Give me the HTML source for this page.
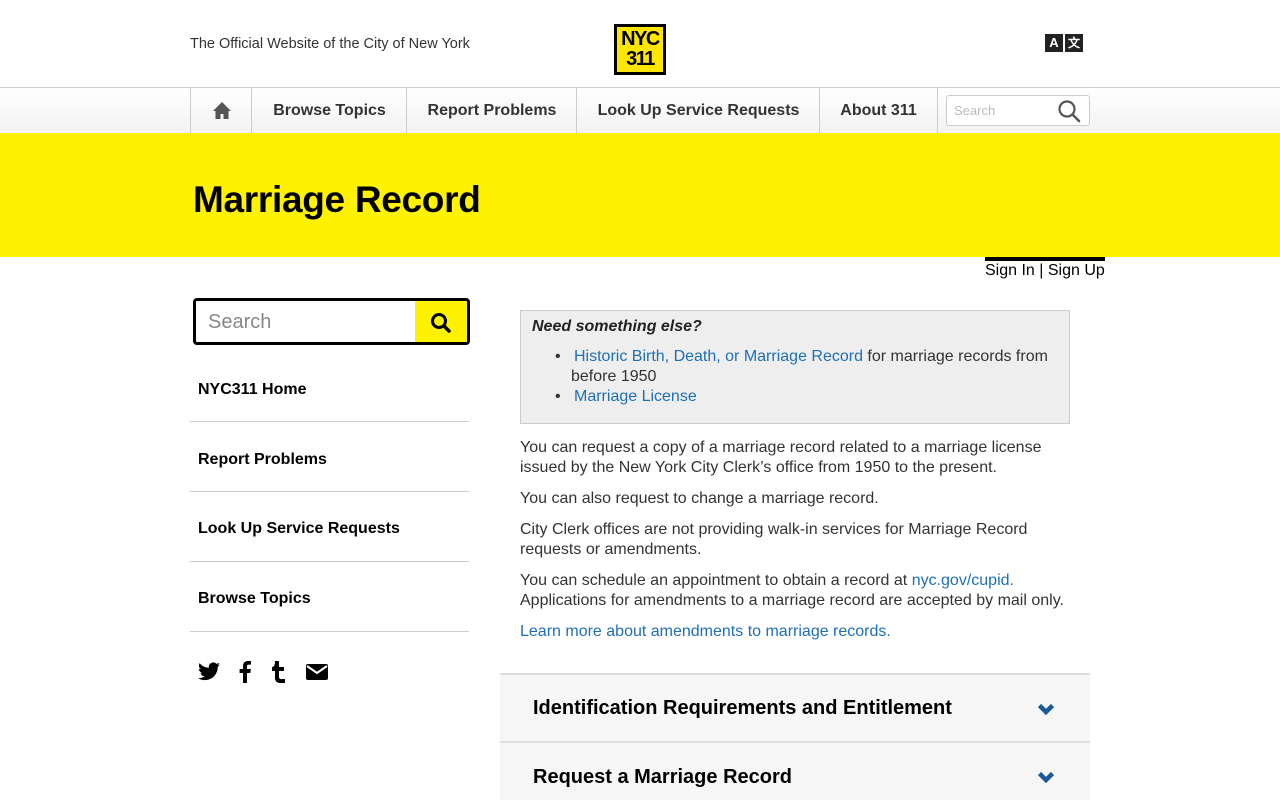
<!DOCTYPE html>
<html><head><meta charset="utf-8"><style>
*{margin:0;padding:0;box-sizing:border-box}
html{overflow:hidden;height:800px}
body{width:1280px;height:800px;overflow:hidden;font-family:"Liberation Sans",Arial,sans-serif;background:#fff;color:#222;position:relative}
.abs{position:absolute}
a{color:#1f6fb5;text-decoration:none}
.nav{position:absolute;top:87px;left:0;width:1280px;height:46px;background:linear-gradient(#fff,#f2f2f2);border-top:1px solid #ccc}
.nav .it{position:absolute;top:0;height:45px;border-left:1px solid #ccc;font-weight:bold;font-size:16px;color:#333;line-height:45px;text-align:center}
.side{position:absolute;left:190px;width:280px;font-weight:bold;font-size:16px;color:#000}
.side .l{position:absolute;left:8px}
.side .hr{position:absolute;left:0;width:279px;height:1px;background:#ccc}
p.t{position:absolute;left:520px;width:560px;font-size:16px;line-height:20px;color:#333}
.acc{position:absolute;left:500px;width:590px;background:#f6f6f6;border-top:2px solid #ddd;font-weight:bold;font-size:20px;color:#000}
</style></head><body>
<div class="abs" style="left:190px;top:36px;font-size:14.5px;color:#333">The Official Website of the City of New York</div>
<div class="abs" style="left:614px;top:24px;width:52px;height:51px;background:#000;padding:3px">
<div style="background:#ffe600;width:46px;height:45px;text-align:center;font-weight:bold;font-size:20px;line-height:20px;color:#000;padding-top:2px;letter-spacing:-1.5px">NYC<br>311</div></div>
<div class="abs" style="left:1045px;top:34px;width:18px;height:18px;background:#222;color:#fff;font-weight:bold;font-size:13px;text-align:center;line-height:18px">A</div>
<div class="abs" style="left:1065px;top:34px;width:18px;height:18px;background:#222;color:#fff;font-weight:bold;font-size:12px;text-align:center;line-height:18px">文</div>
<div class="nav">
<div class="it" style="left:190px;width:62px"><svg width="18" height="17" viewBox="0 0 18 17" style="margin-top:14px"><path d="M9 0L0 9h2.5v8h5v-5h3v5h5V9H18z" fill="#555"/></svg></div>
<div class="it" style="left:251px;width:156px">Browse Topics</div>
<div class="it" style="left:406px;width:171px">Report Problems</div>
<div class="it" style="left:576px;width:244px">Look Up Service Requests</div>
<div class="it" style="left:819px;width:119px;border-right:1px solid #ccc">About 311</div>
<div class="abs" style="left:946px;top:7px;width:144px;height:31px;border:1px solid #ccc;border-radius:3px;background:#fff">
<span class="abs" style="left:7px;top:7px;font-size:13px;color:#bbb">Search</span>
<svg class="abs" style="left:110px;top:3px" width="24" height="24" viewBox="0 0 24 24"><circle cx="10" cy="10" r="7.5" stroke="#555" stroke-width="2.2" fill="none"/><path d="M15.5 15.5L22 22" stroke="#555" stroke-width="2.6" stroke-linecap="round"/></svg></div>
</div>
<div class="abs" style="left:0;top:133px;width:1280px;height:124px;background:#fff200"></div>
<div class="abs" style="left:193px;top:179px;font-size:37px;font-weight:bold;color:#000;letter-spacing:-0.3px">Marriage Record</div>
<div class="abs" style="left:985px;top:257px;width:120px;height:4px;background:#000"></div>
<div class="abs" style="left:985px;top:262px;font-size:16px;color:#000">Sign In | Sign Up</div>
<div class="abs" style="left:193px;top:298px;width:277px;height:47px;border:3px solid #000;border-radius:4px;overflow:hidden">
<span class="abs" style="left:12px;top:10px;font-size:20px;color:#888">Search</span>
<div class="abs" style="right:0;top:0;width:52px;height:41px;background:#fff200"><svg class="abs" style="left:15px;top:11px" width="22" height="22" viewBox="0 0 22 22"><circle cx="9" cy="9" r="6.5" stroke="#000" stroke-width="3" fill="none"/><path d="M14 14l5 5" stroke="#000" stroke-width="3.5" stroke-linecap="round"/></svg></div></div>
<div class="side" style="top:0">
<div class="l" style="top:381px">NYC311 Home</div><div class="hr" style="top:421px"></div>
<div class="l" style="top:451px">Report Problems</div><div class="hr" style="top:491px"></div>
<div class="l" style="top:520px">Look Up Service Requests</div><div class="hr" style="top:561px"></div>
<div class="l" style="top:590px">Browse Topics</div><div class="hr" style="top:631px"></div>
</div>
<svg class="abs" style="left:198px;top:662px" width="22" height="19" viewBox="0 0 24 20"><path d="M24 2.4c-.9.4-1.8.6-2.8.8 1-.6 1.8-1.6 2.2-2.7-1 .6-2 1-3.1 1.2A4.9 4.9 0 0 0 11.900 6 14 14 0 0 1 1.700.9a4.900 4.900 0 0 0 1.500 6.600c-.800 0-1.600-.300-2.200-.600 0 2.400 1.700 4.400 3.900 4.800-.700.200-1.500.200-2.200.100.600 2 2.400 3.400 4.600 3.400A9.900 9.900 0 0 1 0 17.200 14 14 0 0 0 7.500 19.400c9.100 0 14-7.500 14-14v-.600c1-.700 1.800-1.600 2.500-2.400z" fill="#000"/></svg>
<svg class="abs" style="left:239px;top:661px" width="12" height="22" viewBox="0 0 12 22"><path d="M8 22V12h3.3l.5-4H8V5.5c0-1.1.3-1.9 1.9-1.9H12V.2C11.6.1 10.4 0 9 0 6 0 4 1.8 4 5.2V8H.6v4H4v10z" fill="#000"/></svg>
<svg class="abs" style="left:272px;top:661px" width="14" height="22" viewBox="0 0 14 22"><path d="M3 0h4v6h5v4H7v6c0 1.5 1 2 2 2h4v4H8c-3 0-5-2-5-5v-7H0V6c2 0 3-2 3-6z" fill="#000"/></svg>
<svg class="abs" style="left:306px;top:664px" width="22" height="16" viewBox="0 0 22 16"><rect x="0" y="0" width="22" height="16" rx="2" fill="#000"/><path d="M1 2l10 7 10-7" stroke="#fff" stroke-width="2" fill="none"/></svg>
<div class="abs" style="left:520px;top:310px;width:550px;height:114px;background:#eee;border:1px solid #ccc">
<div class="abs" style="left:11px;top:7px;font-size:16px;font-weight:bold;font-style:italic;color:#222">Need something else?</div>
<div class="abs" style="left:36px;top:36px;font-size:16px;line-height:20px;width:500px;color:#333">
<div style="position:relative"><span class="abs" style="left:-2px">•</span><span style="padding-left:17px"><a>Historic Birth, Death, or Marriage Record</a> for marriage records from</span><br><span style="padding-left:14px">before 1950</span></div>
<div style="position:relative"><span class="abs" style="left:-2px">•</span><span style="padding-left:17px"><a>Marriage License</a></span></div></div></div>
<p class="t" style="top:438px">You can request a copy of a marriage record related to a marriage license issued by the New York City Clerk’s office from 1950 to the present.</p>
<p class="t" style="top:489px">You can also request to change a marriage record.</p>
<p class="t" style="top:520px">City Clerk offices are not providing walk-in services for Marriage Record requests or amendments.</p>
<p class="t" style="top:571px">You can schedule an appointment to obtain a record at <a>nyc.gov/cupid.</a><br>Applications for amendments to a marriage record are accepted by mail only.</p>
<p class="t" style="top:622px"><a>Learn more about amendments to marriage records.</a></p>
<div class="acc" style="top:673px;height:68px"><span class="abs" style="left:33px;top:22px">Identification Requirements and Entitlement</span>
<svg class="abs" style="left:537px;top:28px" width="18" height="12" viewBox="0 0 18 12"><path d="M2.5 2.5L9 9l6.5-6.5" stroke="#1a5a96" stroke-width="4.5" fill="none"/></svg></div>
<div class="acc" style="top:741px;height:70px"><span class="abs" style="left:33px;top:23px">Request a Marriage Record</span>
<svg class="abs" style="left:537px;top:28px" width="18" height="12" viewBox="0 0 18 12"><path d="M2.5 2.5L9 9l6.5-6.5" stroke="#1a5a96" stroke-width="4.5" fill="none"/></svg></div>
</body></html>
